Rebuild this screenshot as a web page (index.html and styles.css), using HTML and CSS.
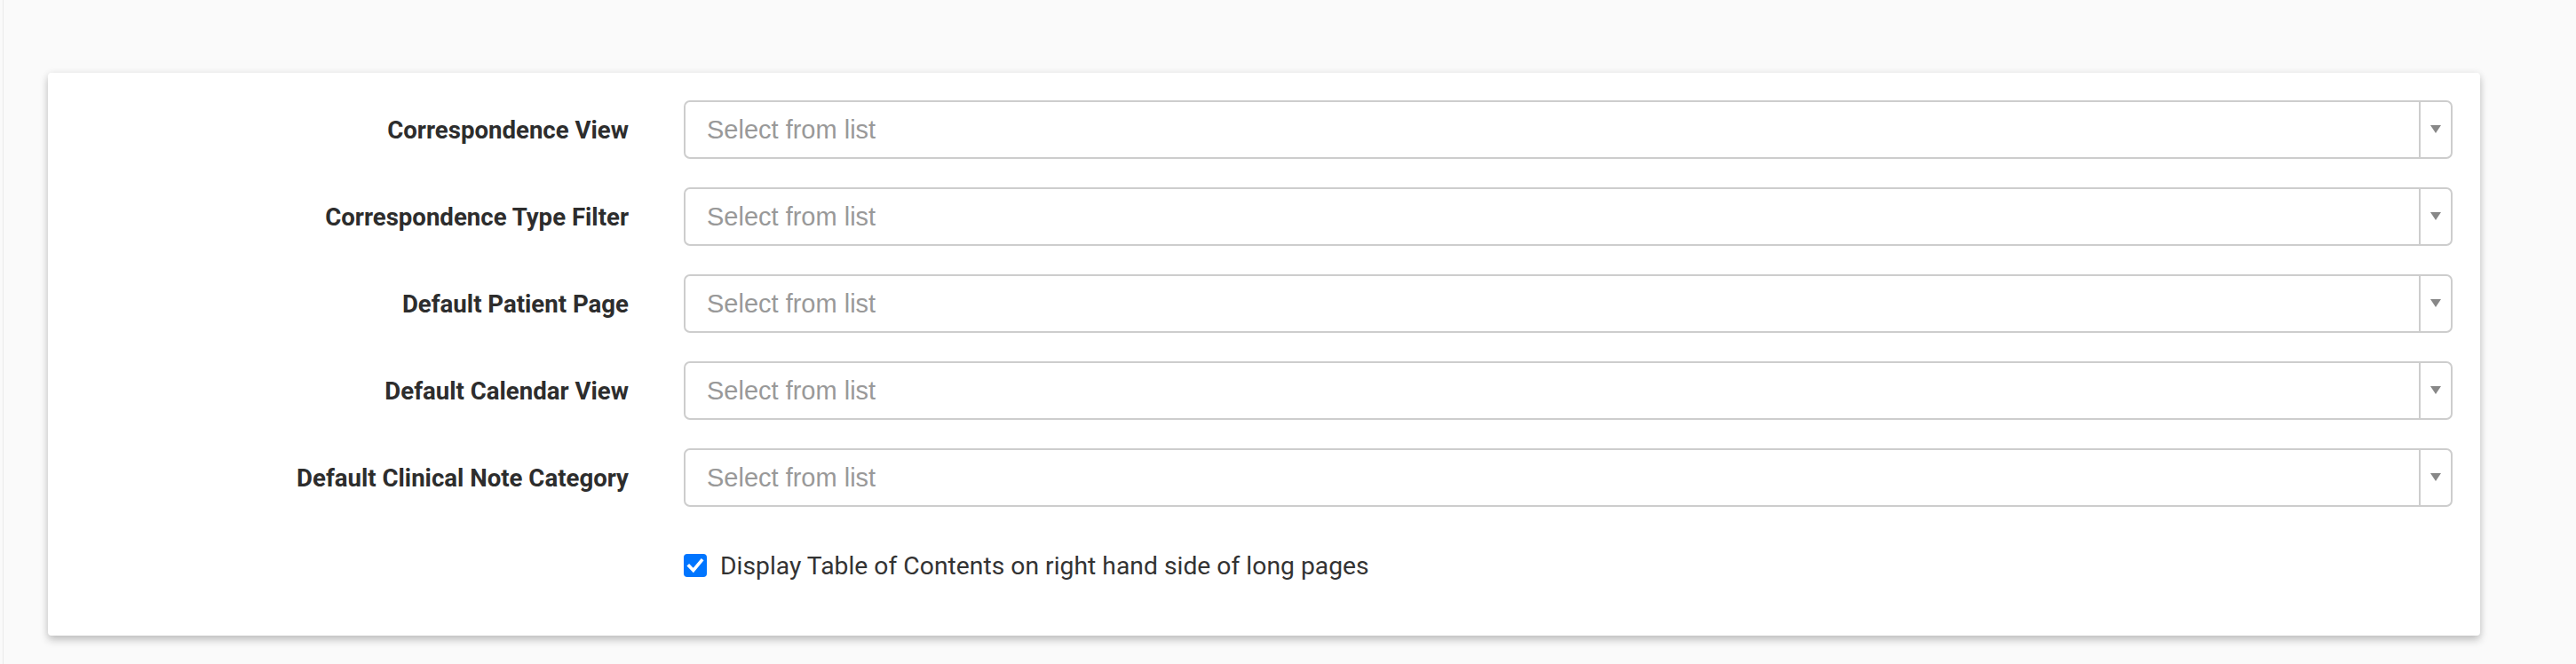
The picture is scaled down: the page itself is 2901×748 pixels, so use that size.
FILE: index.html
```html
<!DOCTYPE html>
<html lang="en">
<head>
<meta charset="utf-8">
<title>Preferences</title>
<link rel="stylesheet" href="styles.css">
</head>
<body>
<div class="page">
  <div class="card">
    <form class="form-grid">
      <label class="field-label">Correspondence View</label>
      <div class="select">
        <span class="select-text">Select from list</span>
        <span class="select-arrow"><span class="tri"></span></span>
      </div>

      <label class="field-label">Correspondence Type Filter</label>
      <div class="select">
        <span class="select-text">Select from list</span>
        <span class="select-arrow"><span class="tri"></span></span>
      </div>

      <label class="field-label">Default Patient Page</label>
      <div class="select">
        <span class="select-text">Select from list</span>
        <span class="select-arrow"><span class="tri"></span></span>
      </div>

      <label class="field-label">Default Calendar View</label>
      <div class="select">
        <span class="select-text">Select from list</span>
        <span class="select-arrow"><span class="tri"></span></span>
      </div>

      <label class="field-label">Default Clinical Note Category</label>
      <div class="select">
        <span class="select-text">Select from list</span>
        <span class="select-arrow"><span class="tri"></span></span>
      </div>

      <div class="spacer"></div>
      <div class="check-row">
        <span class="checkbox">
          <svg viewBox="0 0 26 26" width="26" height="26" aria-hidden="true">
            <path d="M6 13.5 L10.8 18.5 L20 7.5" fill="none" stroke="#fff" stroke-width="3.6" stroke-linecap="square" stroke-linejoin="miter"/>
          </svg>
        </span>
        <span class="check-text">Display Table of Contents on right hand side of long pages</span>
      </div>
    </form>
  </div>
</div>
</body>
</html>
```
FILE: styles.css
```css
html, body {
  margin: 0;
  padding: 0;
  background: #fafafa;
}

.page {
  margin-left: 3px;
  border-left: 1px solid #ebebeb;
  padding: 82px 108px 32px 50px;
  min-height: 748px;
  box-sizing: border-box;
}

.card {
  background: #ffffff;
  border-radius: 4px;
  box-shadow: 0 5px 10px rgba(0, 0, 0, 0.22), 0 0 8px rgba(0, 0, 0, 0.06);
  padding: 31px 31px 66px 0;
}

.form-grid {
  display: grid;
  grid-template-columns: 654px 1fr;
  column-gap: 62px;
  row-gap: 32px;
  margin: 0;
}

.field-label {
  display: flex;
  align-items: center;
  justify-content: flex-end;
  font-family: Roboto, "Liberation Sans", sans-serif;
  font-weight: 700;
  font-size: 27.6px;
  color: #2d2d2d;
}

.select {
  display: flex;
  height: 66px;
  box-sizing: border-box;
  border: 2px solid #cdcdcd;
  border-radius: 7px;
  background: #fff;
}

.select-text {
  flex: 1;
  display: flex;
  align-items: center;
  padding-left: 24px;
  font-family: "Liberation Sans", Arial, sans-serif;
  font-size: 29px;
  color: #999999;
}

.select-arrow {
  width: 34px;
  border-left: 2px solid #cdcdcd;
  display: flex;
  align-items: center;
  justify-content: center;
}

.tri {
  width: 0;
  height: 0;
  border-left: 6px solid transparent;
  border-right: 6px solid transparent;
  border-top: 9px solid #888888;
  margin-top: -2px;
}

.spacer {
  height: 1px;
}

.check-row {
  display: flex;
  align-items: center;
  gap: 15px;
  margin-top: 21px;
  height: 26px;
}

.checkbox {
  width: 26px;
  height: 26px;
  border-radius: 4px;
  background: #0075ff;
  display: flex;
  flex: none;
}

.check-text {
  font-family: Roboto, "Liberation Sans", sans-serif;
  font-size: 28.3px;
  color: #333333;
}
```
